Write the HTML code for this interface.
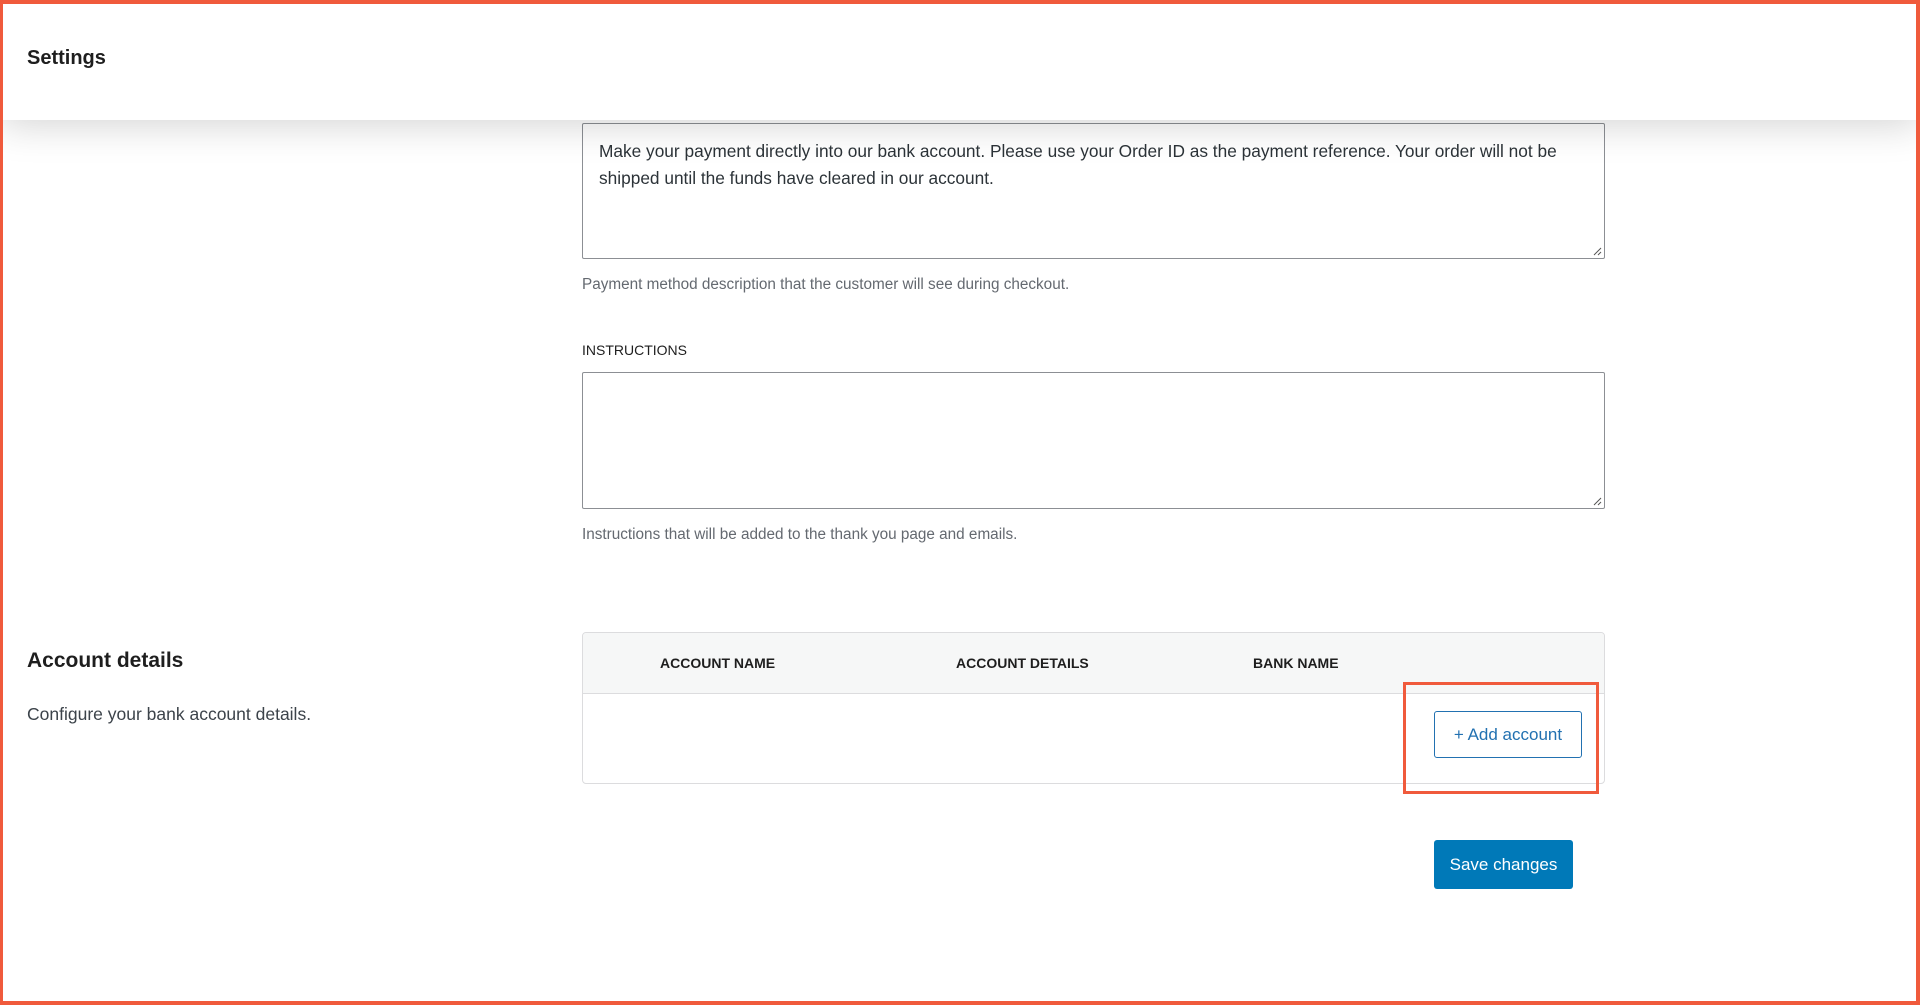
<!DOCTYPE html>
<html><head><meta charset="utf-8"><style>
*{box-sizing:border-box;margin:0;padding:0}
body{width:1920px;height:1005px;position:relative;overflow:hidden;background:#fff;font-family:"Liberation Sans",sans-serif;color:#1e1e1e}
.frame{position:absolute;inset:0;border:4px solid #f05a3c;border-width:4px 4px 4px 3px;z-index:10;pointer-events:none}
.hdr{position:absolute;left:0;top:0;width:1920px;height:120px;background:#fff;z-index:5;box-shadow:0 4px 40px rgba(0,0,0,.18)}
.hdr h1{position:absolute;left:27px;top:47px;font-size:20px;font-weight:bold;color:#1e1e1e}
.ta{position:absolute;left:582px;width:1023px;border:1px solid #8c8f94;border-radius:2px;background:#fff}
.ta p{position:absolute;left:16px;font-size:17.3px;color:#2c3338;white-space:nowrap}
.help{position:absolute;left:582px;font-size:15.3px;color:#646970}
.lbl{position:absolute;left:582px;font-size:14px;color:#1e1e1e}
.grip{position:absolute;right:2px;bottom:2px;width:10px;height:10px}
.tbl{position:absolute;left:582px;top:632px;width:1023px;height:152px;border:1px solid #dcdcde;border-radius:4px;overflow:hidden}
.th{height:61px;background:#f6f7f7;border-bottom:1px solid #dcdcde;position:relative}
.th span{position:absolute;top:22px;font-size:14px;font-weight:bold;color:#1e1e1e}
.btn1{position:absolute;left:1434px;top:711px;width:148px;height:47px;border:1px solid #2271b1;border-radius:3px;color:#2271b1;font-size:17px;text-align:center;line-height:45px;background:#fff}
.red{position:absolute;left:1403px;top:682px;width:196px;height:112px;border:3px solid #f05a3c}
.save{position:absolute;left:1434px;top:840px;width:139px;height:49px;background:#0079b8;border-radius:3px;color:#fff;font-size:17px;text-align:center;line-height:49px}
</style></head><body>
<div class="hdr"><h1>Settings</h1></div>
<div class="ta" style="top:123px;height:136px">
<p style="top:17px">Make your payment directly into our bank account. Please use your Order ID as the payment reference. Your order will not be</p>
<p style="top:44px">shipped until the funds have cleared in our account.</p>
<svg class="grip" viewBox="0 0 10 10"><path d="M9 2L2 9M9 6L6 9" stroke="#555" stroke-width="1"/></svg>
</div>
<div class="help" style="top:276px">Payment method description that the customer will see during checkout.</div>
<div class="lbl" style="top:342px">INSTRUCTIONS</div>
<div class="ta" style="top:372px;height:137px">
<svg class="grip" viewBox="0 0 10 10"><path d="M9 2L2 9M9 6L6 9" stroke="#555" stroke-width="1"/></svg>
</div>
<div class="help" style="top:526px">Instructions that will be added to the thank you page and emails.</div>
<div style="position:absolute;left:27px;top:649px;font-size:21px;font-weight:bold">Account details</div>
<div style="position:absolute;left:27px;top:704px;font-size:17.5px;color:#3c434a">Configure your bank account details.</div>
<div class="tbl"><div class="th"><span style="left:77px">ACCOUNT NAME</span><span style="left:373px">ACCOUNT DETAILS</span><span style="left:670px">BANK NAME</span></div></div>
<div class="btn1">+ Add account</div>
<div class="red"></div>
<div class="save">Save changes</div>
<div class="frame"></div>
</body></html>
